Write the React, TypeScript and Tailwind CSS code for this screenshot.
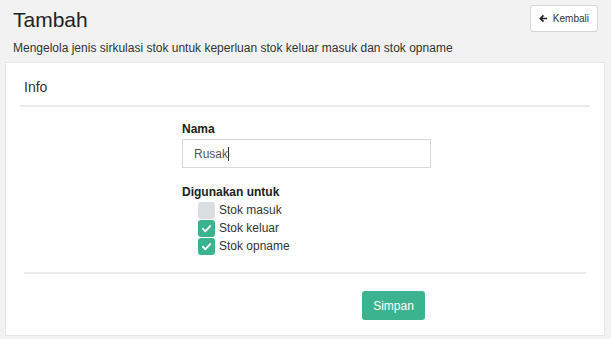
import React from "react";

function Check({ checked, label }: { checked: boolean; label: string }) {
  return (
    <div className="flex items-center h-[18px]">
      <span
        className={
          "w-[17px] h-[17px] rounded-[3px] flex items-center justify-center " +
          (checked ? "bg-[#3cb38f]" : "bg-[#dadee1]")
        }
      >
        {checked && (
          <svg width="11" height="11" viewBox="0 0 12 12">
            <path d="M2 6.3 L4.8 9 L10 3.3" fill="none" stroke="#fff" strokeWidth="2" strokeLinecap="round" strokeLinejoin="round" />
          </svg>
        )}
      </span>
      <span className="ml-[4px] text-[12px] text-[#333]">{label}</span>
    </div>
  );
}

export default function App() {
  return (
    <div
      className="w-[611px] h-[339px] bg-[#f2f2f2] overflow-hidden flex flex-col"
      style={{ fontFamily: '"Liberation Sans", Arial, sans-serif' }}
    >
      <div className="flex justify-between items-start pl-[13px] pr-[13px] pt-[5px]">
        <h1 className="text-[21px] leading-[24px] mt-[3px] text-[#222]">Tambah</h1>
        <button className="h-[27px] px-[8px] flex items-center gap-[5px] bg-white border border-[#d6d6d6] rounded-[3px] text-[10px] text-[#333]">
          <svg width="9" height="9" viewBox="0 0 10 10">
            <path d="M9 5 H2 M5 1.5 L1.5 5 L5 8.5" fill="none" stroke="#222" strokeWidth="1.8" />
          </svg>
          Kembali
        </button>
      </div>
      <p className="pl-[13px] mt-[9px] text-[12px] leading-[14px] text-[#333]">
        Mengelola jenis sirkulasi stok untuk keperluan stok keluar masuk dan stok opname
      </p>
      <div className="ml-[5px] mr-[6px] mt-[7px] h-[274px] bg-white border border-[#e6e6e6] flex flex-col">
        <div className="mx-[14px] h-[44px] border-b-2 border-[#ebebeb] flex items-center pl-[4px] pt-[6px]">
          <span className="text-[14px] text-[#333]">Info</span>
        </div>
        <div className="pl-[176px] pt-[15px] flex flex-col">
          <label className="text-[12px] font-bold text-[#222] leading-[14px]">Nama</label>
          <div className="mt-[3px] w-[249px] h-[29px] border border-[#d9d9d9] flex items-center pl-[11px] text-[12px] text-[#555]">
            Rusak<span className="w-px h-[14px] bg-[#333]"></span>
          </div>
          <label className="mt-[17px] text-[12px] font-bold text-[#222] leading-[14px]">Digunakan untuk</label>
          <div className="mt-[2px] pl-[16px] flex flex-col">
            <Check checked={false} label="Stok masuk" />
            <Check checked={true} label="Stok keluar" />
            <Check checked={true} label="Stok opname" />
          </div>
        </div>
        <div className="mx-[18px] mt-[17px] border-t-2 border-[#ebebeb]"></div>
        <div className="pl-[356px] pt-[17px]">
          <button className="w-[63px] h-[29px] bg-[#3cb38f] rounded-[3px] text-white text-[12px]">Simpan</button>
        </div>
      </div>
    </div>
  );
}
